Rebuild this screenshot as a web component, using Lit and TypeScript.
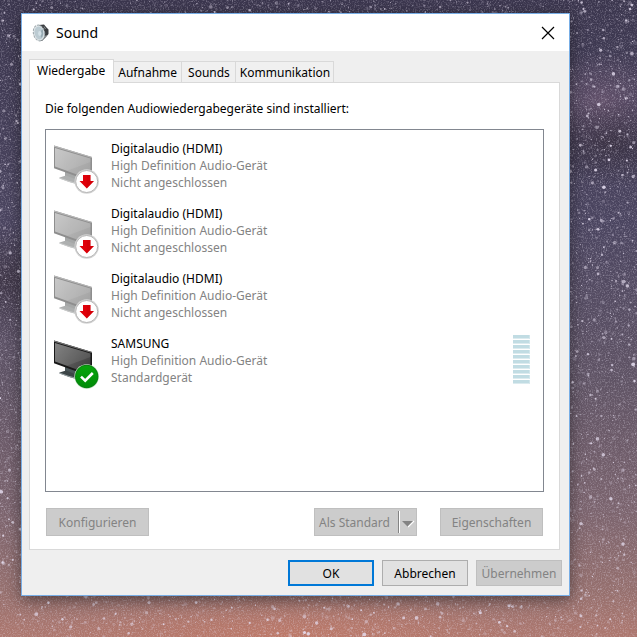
import { LitElement, html, css, svg } from "lit";
import { customElement, state } from "lit/decorators.js";

interface Device {
  name: string;
  driver: string;
  status: string;
  active: boolean;
}

const DEVICES: Device[] = [
  { name: "Digitalaudio (HDMI)", driver: "High Definition Audio-Gerät", status: "Nicht angeschlossen", active: false },
  { name: "Digitalaudio (HDMI)", driver: "High Definition Audio-Gerät", status: "Nicht angeschlossen", active: false },
  { name: "Digitalaudio (HDMI)", driver: "High Definition Audio-Gerät", status: "Nicht angeschlossen", active: false },
  { name: "SAMSUNG", driver: "High Definition Audio-Gerät", status: "Standardgerät", active: true },
];

const TABS = ["Wiedergabe", "Aufnahme", "Sounds", "Kommunikation"];

/* Repeatable pseudo-random sequence, so the sky is the same on every load. */
function makeStars(count: number) {
  let seed = 20177;
  const next = () => {
    seed = (seed * 16807) % 2147483647;
    return seed / 2147483647;
  };
  return Array.from({ length: count }, () => ({
    x: Math.round(next() * 1000),
    y: Math.round(next() * 1000),
    r: 0.9 + Math.pow(next(), 6) * 2.1,
    o: 0.15 + Math.pow(next(), 2) * 0.75,
  }));
}

@customElement("night-sky")
class NightSky extends LitElement {
  static styles = css`
    :host { display: block; overflow: hidden; }
    .sky { display: block; width: 100%; height: 100%; }
  `;

  render() {
    return html`<svg class="sky" viewBox="0 0 1000 1000" preserveAspectRatio="xMidYMid slice" aria-hidden="true">
      <defs>
        <linearGradient id="dusk" x1="0" y1="0" x2="0" y2="1">
          <stop offset="0" stop-color="#3b364e" />
          <stop offset="0.35" stop-color="#4b4560" />
          <stop offset="0.6" stop-color="#605465" />
          <stop offset="0.8" stop-color="#7b646e" />
          <stop offset="0.93" stop-color="#96706e" />
          <stop offset="1" stop-color="#ae786f" />
        </linearGradient>
        <radialGradient id="pink"><stop offset="0" stop-color="#8a6a84" stop-opacity="0.45" /><stop offset="1" stop-color="#8a6a84" stop-opacity="0" /></radialGradient>
        <radialGradient id="dark"><stop offset="0" stop-color="#322936" stop-opacity="0.6" /><stop offset="1" stop-color="#322936" stop-opacity="0" /></radialGradient>
        <radialGradient id="glow"><stop offset="0" stop-color="#c47a66" stop-opacity="0.7" /><stop offset="1" stop-color="#c47a66" stop-opacity="0" /></radialGradient>
        <filter id="grain" x="0" y="0" width="100%" height="100%">
          <feTurbulence type="fractalNoise" baseFrequency="0.5" numOctaves="2" seed="4" />
          <feColorMatrix values="0 0 0 0 0.85  0 0 0 0 0.8  0 0 0 0 0.92  3 0 0 0 -1.4" />
        </filter>
      </defs>
      <rect width="1000" height="1000" fill="url(#dusk)" />
      <ellipse cx="945" cy="160" rx="110" ry="80" fill="url(#pink)" />
      <ellipse cx="960" cy="225" rx="130" ry="70" fill="url(#dark)" />
      <ellipse cx="10" cy="440" rx="70" ry="90" fill="url(#dark)" />
      <ellipse cx="450" cy="1000" rx="380" ry="70" fill="url(#glow)" />
      <rect width="1000" height="1000" filter="url(#grain)" opacity="0.28" />
      ${makeStars(14000).map((s) => svg`<circle cx=${s.x} cy=${s.y} r=${s.r} fill="#e6def0" opacity=${s.o} />`)}
    </svg>`;
  }
}

@customElement("device-icon")
class DeviceIcon extends LitElement {
  static properties = { active: { type: Boolean } };
  declare active: boolean;

  static styles = css`
    :host { display: block; }
    .icon { display: block; width: 52px; height: 56px; }
  `;

  render() {
    const on = this.active;
    return html`<svg class="icon" viewBox="0 0 52 56" aria-hidden="true">
      <defs>
        <linearGradient id="screen" x1="0" y1="0" x2="1" y2="0.7">
          <stop offset="0" stop-color=${on ? "#777" : "#c3c3c3"} />
          <stop offset="1" stop-color=${on ? "#404040" : "#a4a4a4"} />
        </linearGradient>
        <linearGradient id="ok" x1="0" y1="0" x2="0" y2="1">
          <stop offset="0" stop-color="#07a50b" />
          <stop offset="1" stop-color="#008c08" />
        </linearGradient>
      </defs>
      <path d="M15 31 L28 36 L28 43 L15 37Z" fill=${on ? "#4a5558" : "#a6a8a8"} />
      <path d="M9.500 37.500 L16 35.500 L30 41 L28 44.500 Q18 42 9.500 38.500Z" fill=${on ? "#3c4547" : "#aeb0b0"} />
      <path d="M9.500 38 Q18 41.500 27 43.500" fill="none" stroke=${on ? "#a9b5b8" : "#cfd1d1"} stroke-width="0.8" />
      <path d="M4 5.500 L42 17 L42 42 L4 28.200Z" fill=${on ? "#181818" : "#8e8e8e"} />
      <path d="M4 5.500 L42 17 L42 18 L4 6.700Z" fill=${on ? "#757575" : "#b8b8b8"} />
      <path d="M5 8 L40.500 18.500 L40.500 39.500 L5 26.500Z" fill="url(#screen)" />
      <path d="M40.500 18.500 L40.500 22 L17 30.800 L5 26.500 L5 8Z" fill="#fff" opacity="0.09" />
      ${on
        ? svg`<circle cx="36.700" cy="41.500" r="12.300" fill="#cfe6cf" />
            <circle cx="36.700" cy="41.500" r="11.700" fill="#078410" />
            <circle cx="36.700" cy="41.500" r="10.700" fill="url(#ok)" />
            <path d="M31 41.600 L35.200 45.600 L42.800 38" fill="none" stroke="#fff" stroke-width="2.600" />`
        : svg`<circle cx="36.700" cy="41.500" r="12.200" fill="#d4d4d4" />
            <circle cx="36.700" cy="41.500" r="11" fill="#fff" stroke="#b4b4b4" stroke-width="1" />
            <path d="M33 35 H40.500 V41 H44 L36.800 48.500 L29.500 41 H33Z" fill="#e0000a" />
            <path d="M36.800 35 H40.500 V41 H44 L36.800 48.500Z" fill="#bd0008" opacity="0.3" />`}
    </svg>`;
  }
}

@customElement("app-root")
class AppRoot extends LitElement {
  @state() private tab = 0;

  static styles = css`
    :host {
      display: block;
      position: relative;
      min-height: 100vh;
      font: 12px/17px "Noto Sans", "Open Sans", sans-serif;
      color: #000;
    }
    * { box-sizing: border-box; }
    button { font: inherit; color: inherit; margin: 0; padding: 0; border-radius: 0; }
    .backdrop { position: absolute; inset: 0; }
    .desktop { position: relative; padding: 13px 67px 40px 21px; }
    .window {
      border: 1px solid #78aee6;
      background: #efefef;
      box-shadow: 0 4px 14px rgba(0, 0, 0, 0.45);
    }
    .titlebar {
      display: flex;
      align-items: center;
      gap: 6px;
      height: 37px;
      padding: 0 10px;
      background: #fff;
    }
    .speaker { width: 18px; height: 20px; }
    .title { flex: 1; margin: 0; font-size: 14px; font-weight: 400; line-height: 20px; }
    .close { display: grid; place-items: center; width: 22px; height: 22px; border: 0; background: none; }
    .content { padding: 8px 9px 0 7px; }
    .tabs { display: flex; align-items: flex-end; }
    .tab {
      height: 21px;
      padding: 0 4px;
      border: 1px solid #d9d9d9;
      border-bottom: 0;
      border-left: 0;
      background: #f0f0f0;
    }
    .tab.short { padding: 0 3px 0 4px; }
    .tab.third { padding: 0 5px 0 6px; }
    .tab.selected {
      position: relative;
      z-index: 1;
      height: 24px;
      margin-bottom: -1px;
      padding: 0 8px 2px 7px;
      border-left: 1px solid #d9d9d9;
      background: #fff;
    }
    .panel { padding: 17px 15px 13px; border: 1px solid #d9d9d9; background: #fff; }
    .intro { margin: 0 0 12px; }
    .devices {
      min-height: 363px;
      margin: 0;
      padding: 10px 13px 0 4px;
      border: 1px solid #828790;
      list-style: none;
    }
    .device { display: flex; height: 65px; }
    .text { flex: 1; padding-left: 9px; }
    .line { margin: 0; color: #838383; }
    .line.name { color: #000; }
    .meter { display: grid; gap: 1px; width: 17px; align-content: start; }
    .bar { height: 4px; background: #c1dce3; border-bottom: 1px solid #dcebef; border-right: 1px solid #d2e6eb; }
    .actions { display: flex; gap: 23px; padding: 16px 1px 0; }
    .action { width: 103px; height: 28px; border: 1px solid #bfbfbf; background: #ccc; color: #838383; }
    .action.first { margin-right: auto; }
    .action.split { display: flex; align-items: center; justify-content: space-between; padding: 0 1px 0 4px; }
    .arrow { width: 18px; height: 24px; }
    .footer { display: flex; justify-content: flex-end; gap: 8px; padding: 10px 7px 9px; }
    .command { width: 86px; height: 26px; border: 1px solid #adadad; background: #e1e1e1; }
    .command.default { border: 2px solid #0078d7; }
    .command:disabled { border-color: #bfbfbf; background: #ccc; color: #838383; }
  `;

  private titleBar() {
    return html`<header class="titlebar">
      <svg class="speaker" viewBox="0 0 18 20" aria-hidden="true">
        <path d="M7 2 L12 1.500 L14.500 4.500 L16.500 6.500 L16.500 11 L14 14 L10 18 L7 18Z" fill="#3a3d40" />
        <path d="M12 3.500 L13.500 6 M13 14 L14.500 12" stroke="#8b9194" stroke-width="1" />
        <ellipse cx="7" cy="10" rx="5.600" ry="8" transform="rotate(-12 7 10)" fill="#dfe5e8" stroke="#9ba6ab" stroke-width="1" stroke-dasharray="2.500 1" />
        <ellipse cx="7" cy="10" rx="4.400" ry="6.500" transform="rotate(-12 7 10)" fill="#bccbd2" />
        <path d="M7.500 10 L10.500 6 Q12.500 11 9.500 15Z" fill="#96a9b2" />
        <ellipse cx="7.800" cy="10.500" rx="1.700" ry="2.400" fill="#d4e1e7" />
      </svg>
      <h1 class="title" id="title">Sound</h1>
      <button class="close" aria-label="Schließen">
        <svg width="14" height="14" viewBox="0 0 14 14" aria-hidden="true"><path d="M1 1 L13 13 M13 1 L1 13" stroke="#000" stroke-width="1.200" /></svg>
      </button>
    </header>`;
  }

  private deviceRow(d: Device) {
    return html`<li class="device">
      <device-icon ?active=${d.active}></device-icon>
      <div class="text">
        <p class="line name">${d.name}</p>
        <p class="line">${d.driver}</p>
        <p class="line">${d.status}</p>
      </div>
      ${d.active ? html`<div class="meter" role="img" aria-label="Pegel">${Array.from({ length: 10 }, () => html`<span class="bar"></span>`)}</div>` : ""}
    </li>`;
  }

  private tabClass(i: number) {
    if (this.tab === i) return "tab selected";
    return ["tab", "tab", "tab third", "tab short"][i];
  }

  render() {
    return html`
      <night-sky class="backdrop"></night-sky>
      <div class="desktop">
        <section class="window" role="dialog" aria-labelledby="title">
          ${this.titleBar()}
          <div class="content">
            <div class="tabs" role="tablist">
              ${TABS.map((t, i) => html`<button role="tab" aria-selected=${this.tab === i} class=${this.tabClass(i)} @click=${() => (this.tab = i)}>${t}</button>`)}
            </div>
            <div class="panel" role="tabpanel">
              <p class="intro">Die folgenden Audiowiedergabegeräte sind installiert:</p>
              <ul class="devices">${DEVICES.map((d) => this.deviceRow(d))}</ul>
              <div class="actions">
                <button class="action first" disabled>Konfigurieren</button>
                <button class="action split" disabled>Als Standard
                  <svg class="arrow" viewBox="0 0 18 24" aria-hidden="true">
                    <path d="M1.500 1 V23" stroke="#838383" /><path d="M2.500 1 V23" stroke="#fff" />
                    <path d="M5 11 H17 L11 17Z" fill="#838383" /><path d="M11 17 L17 11" stroke="#fff" stroke-width="1.300" />
                  </svg>
                </button>
                <button class="action" disabled>Eigenschaften</button>
              </div>
            </div>
          </div>
          <footer class="footer">
            <button class="command default">OK</button>
            <button class="command">Abbrechen</button>
            <button class="command" disabled>Übernehmen</button>
          </footer>
        </section>
      </div>
    `;
  }
}
